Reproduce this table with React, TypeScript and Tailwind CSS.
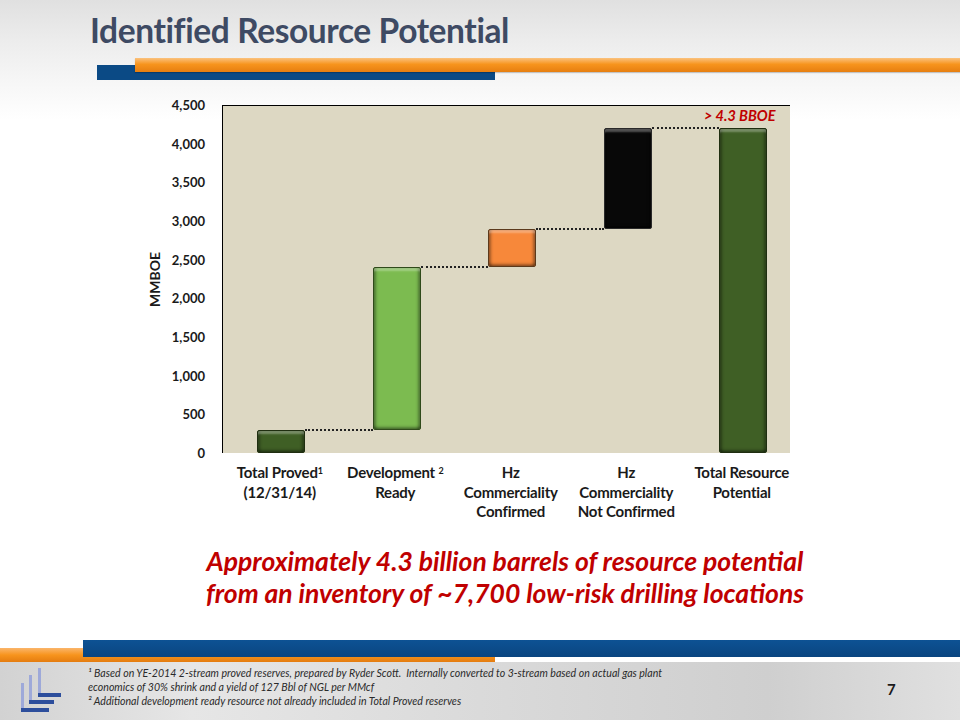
const SCALE = 348 / 4500;

const bars = [
  { left: 34, from: 0, to: 300, cls: "bg-[#3f5f25] border-[#1f2e10]" },
  { left: 150, from: 300, to: 2400, cls: "bg-[#7cbb50] border-[#2f4a1a]" },
  { left: 265, from: 2400, to: 2900, cls: "bg-[#f7883a] border-[#5b3a1c]" },
  { left: 381, from: 2900, to: 4200, cls: "bg-[#080808] border-[#2a2a2a]" },
  { left: 496, from: 0, to: 4200, cls: "bg-[#3f5f25] border-[#1f2e10]" },
];

const ticks = ["4,500", "4,000", "3,500", "3,000", "2,500", "2,000", "1,500", "1,000", "500", "0"];

function Bar({ left, from, to, cls }: { left: number; from: number; to: number; cls: string }) {
  return (
    <div
      className={`absolute w-[48px] border rounded-[2px] shadow-[inset_0_4px_2px_-1px_rgba(255,255,255,0.3),inset_3px_0_3px_-1px_rgba(0,0,0,0.35),inset_-3px_0_3px_-1px_rgba(0,0,0,0.35),inset_0_-3px_3px_-1px_rgba(0,0,0,0.35)] ${cls}`}
      style={{ left, bottom: from * SCALE, height: (to - from) * SCALE }}
    />
  );
}

function Connector({ x1, x2, value }: { x1: number; x2: number; value: number }) {
  return (
    <div
      className="absolute border-t-2 border-dotted border-[#222]"
      style={{ left: x1, width: x2 - x1, bottom: value * SCALE - 1 }}
    />
  );
}

function Logo() {
  return (
    <svg width="42" height="48" viewBox="0 0 42 48">
      <rect x="17" y="0" width="3" height="27" fill="#9ea9d9" />
      <rect x="17" y="25" width="23" height="4" fill="#2d4e9c" />
      <rect x="8" y="7" width="3" height="28" fill="#9ea9d9" />
      <rect x="8" y="32" width="25" height="4" fill="#2d4e9c" />
      <rect x="0" y="15" width="3" height="29" fill="#9ea9d9" />
      <rect x="0" y="40" width="28" height="4" fill="#2d4e9c" />
    </svg>
  );
}

export default function App() {
  return (
    <main className="w-[960px] h-[720px] overflow-hidden flex flex-col font-['Lato','Liberation_Sans',sans-serif] text-[#1a1a1a] bg-[linear-gradient(180deg,#e0e0e0_0px,#ececec_40px,#f6f6f6_80px,#ffffff_120px,#ffffff_100%)]">
      {/* header */}
      <div className="h-[58px] pl-[90px] pt-[10px]">
        <h1 className="text-[33.5px] leading-[40px] font-bold tracking-[-0.4px] text-[#3e4a63]">
          Identified Resource Potential
        </h1>
      </div>
      <div className="relative h-[22px]">
        <div className="absolute left-[97px] top-[7px] w-[398px] h-[15px] bg-[#0b4a85]" />
        <div className="absolute left-[135px] right-0 top-0 h-[14px] bg-[linear-gradient(180deg,#fbc27e_0%,#f7941d_45%,#e67e10_100%)] shadow-[0_1px_1px_rgba(0,0,0,0.2)]" />
      </div>

      {/* chart */}
      <div className="flex mt-[25px]">
        <div className="w-[146px]" />
        <div className="w-[18px] h-[348px] flex items-center justify-center">
          <span className="-rotate-90 whitespace-nowrap text-[14px] font-bold">MMBOE</span>
        </div>
        <div className="w-[41px] h-[362px] -mt-[7px] flex flex-col justify-between items-end">
          {ticks.map((t) => (
            <span key={t} className="text-[13px] leading-[14px] font-bold">
              {t}
            </span>
          ))}
        </div>
        <div className="ml-[17px] relative w-[568px] h-[348px] bg-[#ddd8c3] border-t border-l border-black">
          {bars.map((b) => (
            <Bar key={b.left} {...b} />
          ))}
          <Connector x1={82} x2={150} value={300} />
          <Connector x1={198} x2={265} value={2400} />
          <Connector x1={313} x2={381} value={2900} />
          <Connector x1={429} x2={496} value={4200} />
          <span className="absolute left-[481px] top-[2px] text-[14.5px] leading-[16px] font-bold italic text-[#c00000]">
            &gt; 4.3 BBOE
          </span>
        </div>
      </div>

      {/* category labels */}
      <div className="flex pl-[222px] mt-[3px] text-[15px] leading-[19.5px] font-bold text-center tracking-[-0.2px]">
        <div className="w-[115.5px]">
          Total Proved<sup className="text-[9px]">1</sup>
          <br />
          (12/31/14)
        </div>
        <div className="w-[115.5px]">
          Development <sup className="text-[9px]">2</sup>
          <br />
          Ready
        </div>
        <div className="w-[115.5px]">
          Hz
          <br />
          Commerciality
          <br />
          Confirmed
        </div>
        <div className="w-[115.5px]">
          Hz
          <br />
          Commerciality
          <br />
          Not Confirmed
        </div>
        <div className="w-[115.5px]">
          Total Resource
          <br />
          Potential
        </div>
      </div>

      {/* caption */}
      <div className="pl-[50px] mt-[23px] text-center text-[26.5px] leading-[32px] font-bold italic text-[#c00000]">
        <p>Approximately 4.3 billion barrels of resource potential</p>
        <p>from an inventory of ~7,700 low-risk drilling locations</p>
      </div>

      {/* footer */}
      <div className="relative h-[22px] mt-auto">
        <div className="absolute left-0 top-[8px] w-[495px] h-[14px] bg-[linear-gradient(180deg,#fbb56a_0%,#f7941d_50%,#e47c10_100%)]" />
        <div className="absolute left-[83px] right-0 top-0 h-[17px] bg-[linear-gradient(180deg,#0d5294_0%,#0a4580_100%)]" />
      </div>
      <div className="h-[58px] flex bg-[linear-gradient(90deg,#d2d2d2_0%,#e6e6e6_20%,#dadada_50%,#cfcfcf_80%,#e0e0e0_100%)]">
        <div className="pl-[21px] pt-[6px] w-[88px]">
          <Logo />
        </div>
        <div className="pt-[4px] w-[799px] text-[10.6px] leading-[14px] italic text-[#2a2a2a]">
          <p>
            ¹ Based on YE-2014 2-stream proved reserves, prepared by Ryder Scott.&nbsp; Internally converted to 3-stream
            based on actual gas plant
          </p>
          <p>economics of 30% shrink and a yield of 127 Bbl of NGL per MMcf</p>
          <p>² Additional development ready resource not already included in Total Proved reserves</p>
        </div>
        <div className="pt-[16px] text-[15px] font-bold">7</div>
      </div>
    </main>
  );
}
